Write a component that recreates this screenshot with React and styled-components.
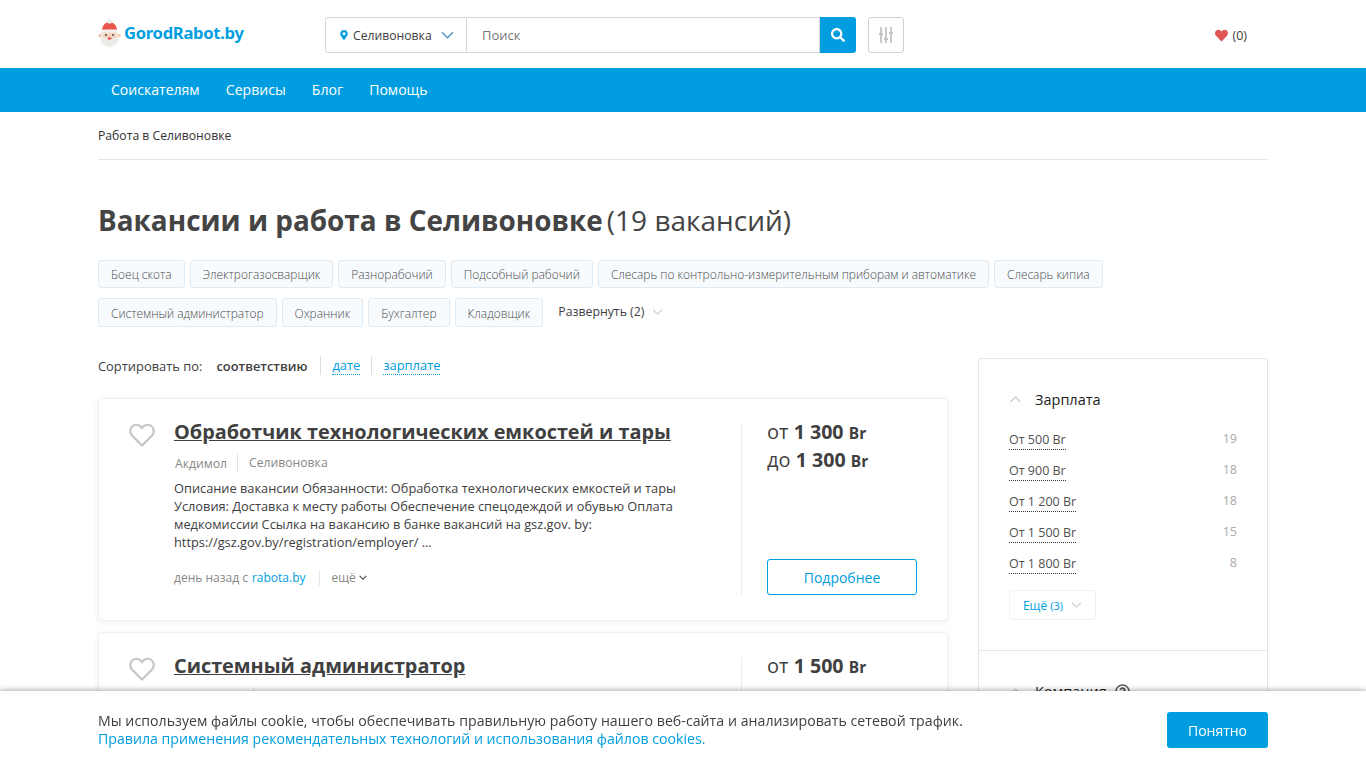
import styled, { createGlobalStyle } from "styled-components";
import { FaHeart, FaMapMarkerAlt, FaSearch, FaRegQuestionCircle } from "react-icons/fa";

const BLUE = "#009ee0";

const GlobalStyle = createGlobalStyle`
  html, body {
    margin: 0;
    padding: 0;
    height: 100%;
    overflow: hidden;
    background: #fff;
    font-family: "Open Sans", "Noto Sans", sans-serif;
    color: #404040;
  }
  * { box-sizing: border-box; }
`;

/* ---------- header ---------- */

const Wrap = styled.div`
  width: 1170px;
  margin-left: 98px;
`;

const Header = styled(Wrap)`
  height: 68px;
  padding-top: 2px;
  display: flex;
  align-items: center;
`;

const Logo = styled.a`
  width: 227px;
  display: flex;
  align-items: center;
  gap: 3px;
  color: ${BLUE};
  font-family: "Noto Sans", sans-serif;
  font-weight: 700;
  font-size: 16.6px;
  letter-spacing: -0.3px;
  margin-top: -5px;
`;

const SearchBar = styled.div`
  display: flex;
  width: 531px;
  height: 36px;
`;

const CityPicker = styled.div`
  width: 142px;
  display: flex;
  align-items: center;
  padding-left: 14px;
  border: 1px solid #d6d6d6;
  border-radius: 3px 0 0 3px;
  font-size: 12.2px;
  color: #404040;
  svg.pin { color: ${BLUE}; font-size: 10px; margin-right: 4px; margin-left: -1px; }
  svg.arrow { margin-left: 9px; }
`;

const SearchInput = styled.div`
  flex: 1;
  display: flex;
  align-items: center;
  padding-left: 15px;
  border: 1px solid #d6d6d6;
  border-left: 0;
  font-size: 13px;
  color: #777;
`;

const SearchButton = styled.button`
  width: 36px;
  border: 0;
  padding: 0;
  background: ${BLUE};
  color: #fff;
  border-radius: 0 3px 3px 0;
  display: flex;
  align-items: center;
  justify-content: center;
  font-size: 14px;
`;

const FilterButton = styled.button`
  width: 36px;
  height: 36px;
  margin-left: 12px;
  padding: 0;
  background: #fff;
  border: 1px solid #d0d0d0;
  border-radius: 3px;
  display: flex;
  align-items: center;
  justify-content: center;
`;

const Favorites = styled.div`
  margin-left: auto;
  margin-right: 21px;
  display: flex;
  align-items: center;
  gap: 4px;
  font-size: 12.5px;
  color: #404040;
  svg { color: #e05555; font-size: 13px; }
`;

const NavBar = styled.nav`
  height: 44px;
  background: ${BLUE};
`;

const NavList = styled(Wrap)`
  height: 44px;
  display: flex;
  align-items: center;
  gap: 26.2px;
  padding: 0 0 2px 13px;
  color: #fff;
  font-size: 14.05px;
`;

const Breadcrumb = styled(Wrap)`
  height: 48px;
  border-bottom: 1px solid #e6e6e6;
  display: flex;
  align-items: center;
  font-size: 12.2px;
  color: #333;
`;

const Title = styled.h1`
  margin: 40px 0 0;
  height: 41px;
  font-size: 27.9px;
  line-height: 40px;
  font-weight: 700;
  color: #444;
  white-space: nowrap;
  span {
    font-weight: 400;
    font-size: 28px;
    margin-left: 4px;
  }
`;

const Tags = styled.div`
  margin-top: 19px;
  display: flex;
  flex-direction: column;
  gap: 10px;
`;

const TagRow = styled.div`
  display: flex;
  gap: 5px;
  align-items: center;
`;

const Tag = styled.a`
  height: ${(p) => (p.$tall ? 29 : 28)}px;
  padding: 0 12px;
  display: flex;
  align-items: center;
  font-size: 11.93px;
  font-weight: 300;
  color: #4c4c4c;
  background: #f7fbfe;
  border: 1px solid #deebf5;
  border-radius: 3px;
`;

const Expand = styled.span`
  display: flex;
  align-items: center;
  margin: -2px 0 0 10px;
  gap: 8px;
  font-size: 12.3px;
  color: #404040;
`;

/* ---------- main columns ---------- */

const Columns = styled.div`
  margin-top: 29px;
  display: flex;
  justify-content: space-between;
  align-items: flex-start;
`;

const Left = styled.div`
  width: 850px;
`;

const SortRow = styled.div`
  height: 19px;
  margin-bottom: 23px;
  display: flex;
  align-items: center;
  font-size: 12.9px;
  color: #404040;
  strong { margin-left: 14px; font-weight: 600; padding-right: 13px; }
`;

const SortLink = styled.a`
  padding: 0 11px;
  border-left: 1px solid #ddd;
  height: 19px;
  line-height: 19px;
  color: ${BLUE};
  span { border-bottom: 1px dotted ${BLUE}; }
`;

const Card = styled.article`
  height: 223px;
  margin-bottom: 11px;
  padding: 24px 30px;
  display: flex;
  background: #fff;
  border: 1px solid #f0f0f0;
  border-radius: 4px;
  box-shadow: 0 1px 6px rgba(0, 0, 0, 0.07);
`;

const LikeIcon = styled.div`
  width: 45px;
  flex: none;
  line-height: 0;
`;

const CardBody = styled.div`
  width: 567px;
  padding-right: 30px;
  flex: none;
`;

const JobTitle = styled.a`
  display: block;
  margin-top: -8px;
  font-size: 19.85px;
  line-height: 34px;
  font-weight: 700;
  color: #404040;
  text-decoration: underline;
  white-space: nowrap;
`;

const Meta = styled.div`
  margin-top: 5px;
  height: 18px;
  display: flex;
  align-items: center;
  padding-left: 1px;
  font-size: 12.2px;
  color: #888;
  span + span {
    margin-left: 10px;
    padding-left: 11px;
    border-left: 1px solid #e2e2e2;
    line-height: 18px;
  }
`;

const Description = styled.p`
  margin: 7px 0 0;
  font-size: 12.8px;
  line-height: 18px;
  color: #404040;
`;

const CardFooter = styled.div`
  margin-top: 18px;
  display: flex;
  align-items: center;
  font-size: 12px;
  color: #888;
  a { color: ${BLUE}; margin-left: 4px; }
  span {
    display: flex;
    align-items: center;
    gap: 3px;
    margin-left: 13px;
    padding-left: 12px;
    height: 16px;
    border-left: 1px solid #dfe7ec;
  }
`;

const Aside = styled.div`
  width: 176px;
  flex: none;
  padding-left: 25px;
  border-left: 1px solid #ececec;
  display: flex;
  flex-direction: column;
  height: 172px;
`;

const Price = styled.div`
  font-size: 20px;
  line-height: 28px;
  margin-top: -5px;
  color: #404040;
  white-space: nowrap;
  b { font-weight: 700; font-size: 19.6px; }
  small { font-size: 15.5px; font-weight: 700; }
  & + & { margin-top: -1px; }
`;

const MoreButton = styled.a`
  margin-top: auto;
  width: 150px;
  height: 36px;
  flex: none;
  display: flex;
  align-items: center;
  justify-content: center;
  font-size: 14px;
  color: ${BLUE};
  border: 1px solid ${BLUE};
  border-radius: 3px;
`;

/* ---------- sidebar ---------- */

const Sidebar = styled.aside`
  width: 290px;
  margin-top: 2px;
  background: #fff;
  border: 1px solid #e6e6e6;
  border-radius: 3px;
`;

const FilterGroup = styled.section`
  padding: 30px;
  border-bottom: 1px solid #e6e6e6;
`;

const FilterTitle = styled.div`
  display: flex;
  align-items: center;
  gap: 13px;
  height: 20px;
  font-size: 14.5px;
  font-weight: 500;
  color: #1c1c1c;
  svg.help { margin-left: -5px; font-size: 15px; color: #555; }
`;

const FilterRows = styled.div`
  margin-top: 22px;
  display: flex;
  flex-direction: column;
  gap: 12px;
`;

const FilterRow = styled.div`
  height: 19px;
  display: flex;
  justify-content: space-between;
  font-size: 12.5px;
  line-height: 18px;
  color: #505050;
  a { border-bottom: 1px dotted #333; height: 19px; }
  i { font-style: normal; color: #aaa; margin-top: -1px; }
`;

const ShowMore = styled.a`
  margin-top: 16px;
  width: 87px;
  height: 30px;
  display: flex;
  align-items: center;
  justify-content: center;
  gap: 8px;
  font-size: 12px;
  color: ${BLUE};
  border: 1px solid #eef1f3;
  border-radius: 3px;
  small { font-size: 11px; }
`;

/* ---------- cookie bar ---------- */

const CookieBar = styled.div`
  position: fixed;
  left: 0;
  right: 0;
  bottom: 0;
  height: 77px;
  background: #fff;
  box-shadow: 0 0 6px rgba(0, 0, 0, 0.45);
  display: flex;
  align-items: flex-start;
  padding: 21px 98px 0;
  justify-content: space-between;
`;

const CookieText = styled.div`
  font-size: 14.15px;
  line-height: 18px;
  color: #404040;
  span { letter-spacing: 0.035px; }
  a { color: ${BLUE}; display: block; }
`;

const CookieButton = styled.button`
  width: 101px;
  height: 36px;
  border: 0;
  background: ${BLUE};
  color: #fff;
  font-family: inherit;
  font-size: 14px;
  border-radius: 3px;
`;

const Chevron = ({ up, color = "#c8c8c8", w = 12, h = 7, sw = 1.2 }) => (
  <svg className="arrow" width={w} height={h} viewBox="0 0 12 7" fill="none">
    <path d={up ? "M1 6l5-5 5 5" : "M1 1l5 5 5-5"} stroke={color} strokeWidth={sw} />
  </svg>
);

const OutlineHeart = () => (
  <svg width="26" height="24" viewBox="0 0 26 24" fill="none">
    <path
      d="M13 22.5L3 12.5C0.3 9.6 0.8 4.6 4.2 2.6C7.4 0.8 11 2 13 5.2C15 2 18.6 0.8 21.8 2.6C25.2 4.6 25.7 9.6 23 12.5Z"
      stroke="#c6c6c6"
      strokeWidth="2.2"
      strokeLinejoin="round"
    />
  </svg>
);

const SantaLogo = () => (
  <svg width="23" height="29" viewBox="0 0 23 29">
    <ellipse cx="11.5" cy="19" rx="9.5" ry="10" fill="#ecebe7" />
    <path d="M4 13C4 7 8 4 11.5 4S19 7 19 13z" fill="#e8564d" />
    <circle cx="11.5" cy="3" r="2.6" fill="#efedea" />
    <rect x="3.5" y="11.5" width="16" height="3.5" rx="1.7" fill="#f4f2ee" />
    <rect x="5" y="14.5" width="13" height="5.5" fill="#f8d5c0" />
    <circle cx="2" cy="17.5" r="1.8" fill="#f4c9ae" />
    <circle cx="21" cy="17.5" r="1.8" fill="#f4c9ae" />
    <circle cx="8" cy="17" r="1" fill="#444" />
    <circle cx="15" cy="17" r="1" fill="#444" />
    <ellipse cx="11.5" cy="20.5" rx="2" ry="1.3" fill="#e8564d" />
  </svg>
);

const SlidersIcon = () => (
  <svg width="14" height="16" viewBox="0 0 14 16" fill="none" stroke="#c4c4c4">
    <path d="M2 0v16M7 0v16M12 0v16" strokeWidth="1.8" />
    <path d="M0 7h4M5 12h4M10 6h4" strokeWidth="2.2" />
  </svg>
);

const salaries = [
  ["От 500 Br", 19],
  ["От 900 Br", 18],
  ["От 1 200 Br", 18],
  ["От 1 500 Br", 15],
  ["От 1 800 Br", 8],
];

const firstRow = [
  "Боец скота",
  "Электрогазосварщик",
  "Разнорабочий",
  "Подсобный рабочий",
  "Слесарь по контрольно-измерительным приборам и автоматике",
  "Слесарь кипиа",
];

const secondRow = ["Системный администратор", "Охранник", "Бухгалтер", "Кладовщик"];

export default function App() {
  return (
    <>
      <GlobalStyle />
      <Header>
        <Logo>
          <SantaLogo />
          GorodRabot.by
        </Logo>
        <SearchBar>
          <CityPicker>
            <FaMapMarkerAlt className="pin" />
            Селивоновка
            <Chevron color="#4a8fc0" w={13} h={8} />
          </CityPicker>
          <SearchInput>Поиск</SearchInput>
          <SearchButton>
            <FaSearch />
          </SearchButton>
        </SearchBar>
        <FilterButton>
          <SlidersIcon />
        </FilterButton>
        <Favorites>
          <FaHeart />
          (0)
        </Favorites>
      </Header>
      <NavBar>
        <NavList>
          <span>Соискателям</span>
          <span>Сервисы</span>
          <span>Блог</span>
          <span>Помощь</span>
        </NavList>
      </NavBar>
      <Breadcrumb>Работа в Селивоновке</Breadcrumb>
      <Wrap>
        <Title>
          Вакансии и работа в Селивоновке<span>(19 вакансий)</span>
        </Title>
        <Tags>
          <TagRow>
            {firstRow.map((t) => (
              <Tag key={t}>{t}</Tag>
            ))}
          </TagRow>
          <TagRow>
            {secondRow.map((t) => (
              <Tag key={t} $tall>
                {t}
              </Tag>
            ))}
            <Expand>
              Развернуть (2) <Chevron w={11} h={6} />
            </Expand>
          </TagRow>
        </Tags>
        <Columns>
          <Left>
            <SortRow>
              Сортировать по:
              <strong>соответствию</strong>
              <SortLink>
                <span>дате</span>
              </SortLink>
              <SortLink>
                <span>зарплате</span>
              </SortLink>
            </SortRow>
            <Card>
              <LikeIcon>
                <OutlineHeart />
              </LikeIcon>
              <CardBody>
                <JobTitle>Обработчик технологических емкостей и тары</JobTitle>
                <Meta>
                  <span>Акдимол</span>
                  <span>Селивоновка</span>
                </Meta>
                <Description>
                  Описание вакансии Обязанности: Обработка технологических емкостей и тары Условия:
                  Доставка к месту работы Обеспечение спецодеждой и обувью Оплата медкомиссии Ссылка
                  на вакансию в банке вакансий на gsz.gov. by:
                  https://gsz.gov.by/registration/employer/ ...
                </Description>
                <CardFooter>
                  день назад с <a>rabota.by</a>
                  <span>
                    ещё <Chevron color="#555" w={8} h={5} sw={1.8} />
                  </span>
                </CardFooter>
              </CardBody>
              <Aside>
                <Price>
                  от <b>1 300</b> <small>Br</small>
                </Price>
                <Price>
                  до <b>1 300</b> <small>Br</small>
                </Price>
                <MoreButton>Подробнее</MoreButton>
              </Aside>
            </Card>
            <Card>
              <LikeIcon>
                <OutlineHeart />
              </LikeIcon>
              <CardBody>
                <JobTitle>Системный администратор</JobTitle>
                <Meta>
                  <span>Агросервис</span>
                  <span>Селивоновка</span>
                </Meta>
              </CardBody>
              <Aside>
                <Price>
                  от <b>1 500</b> <small>Br</small>
                </Price>
              </Aside>
            </Card>
          </Left>
          <Sidebar>
            <FilterGroup>
              <FilterTitle>
                <Chevron w={13} h={7} up />
                Зарплата
              </FilterTitle>
              <FilterRows>
                {salaries.map(([label, count]) => (
                  <FilterRow key={label}>
                    <a>{label}</a>
                    <i>{count}</i>
                  </FilterRow>
                ))}
              </FilterRows>
              <ShowMore>
                <span>
                  Ещё <small>(3)</small>
                </span>
                <Chevron w={11} h={6} />
              </ShowMore>
            </FilterGroup>
            <FilterGroup>
              <FilterTitle>
                <Chevron w={13} h={7} up />
                Компания
                <FaRegQuestionCircle className="help" />
              </FilterTitle>
            </FilterGroup>
          </Sidebar>
        </Columns>
      </Wrap>
      <CookieBar>
        <CookieText>
          <span>
            Мы используем файлы cookie, чтобы обеспечивать правильную работу нашего веб-сайта и
            анализировать сетевой трафик.
          </span>
          <a>Правила применения рекомендательных технологий и использования файлов cookies.</a>
        </CookieText>
        <CookieButton>Понятно</CookieButton>
      </CookieBar>
    </>
  );
}
